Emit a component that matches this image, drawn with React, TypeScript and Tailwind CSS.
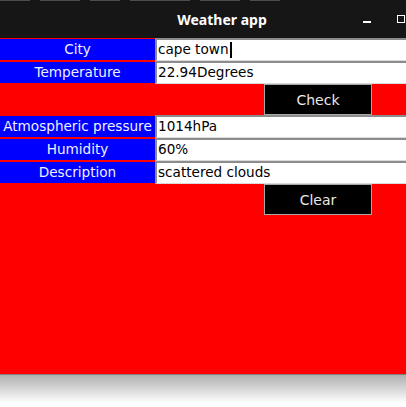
import React from "react";

const font = { fontFamily: '"DejaVu Sans", "Liberation Sans", sans-serif' };

function Label({ text }: { text: string }) {
  return (
    <div className="w-[155px] h-[23px] py-px shrink-0">
      <div className="h-[21px] bg-[#0000ff] text-[#f0f0ff] text-[13.6px] flex items-center justify-center leading-none">
        {text}
      </div>
    </div>
  );
}

function Entry({ value, cursor }: { value: string; cursor?: boolean }) {
  return (
    <div className="flex-1 h-[23px] bg-white border-t-2 border-l-2 border-b border-t-[#8c8c8c] border-l-[#8c8c8c] border-b-[#d9d9d9] flex items-center pl-[1px] text-[13.6px] text-black leading-none">
      <span>{value}</span>
      {cursor && <span className="inline-block w-[2px] h-[16px] bg-black ml-px" />}
    </div>
  );
}

function Row({ label, value, cursor }: { label: string; value: string; cursor?: boolean }) {
  return (
    <div className="flex h-[23px]">
      <Label text={label} />
      <Entry value={value} cursor={cursor} />
    </div>
  );
}

function ButtonRow({ text }: { text: string }) {
  return (
    <div className="h-[31px] flex">
      <div className="w-[264px] shrink-0" />
      <div className="w-[108px] h-[31px] bg-black border border-[#a8a8a8] text-[#e8e8e8] text-[14px] flex items-center justify-center leading-none">
        {text}
      </div>
    </div>
  );
}

export default function App() {
  return (
    <div className="w-[406px] h-[407px] bg-white overflow-hidden" style={font}>
      <div className="h-[38px] bg-[#161616] relative">
        <div className="absolute left-0 top-0 w-full h-[2px] flex gap-[10px] opacity-60">
          <div className="w-[30px] h-[1px] bg-[#707070]" />
          <div className="w-[40px] h-[1px] bg-[#707070]" />
          <div className="w-[30px] h-[1px] bg-[#707070]" />
          <div className="w-[60px] h-[1px] bg-[#707070]" />
          <div className="w-[40px] h-[1px] bg-[#707070]" />
          <div className="w-[30px] h-[1px] bg-[#707070]" />
        </div>
        <div
          className="absolute top-[10px] left-[166px] w-[112px] text-center text-white text-[14px] font-bold leading-[20px]"
          style={{ fontFamily: '"Noto Sans", "DejaVu Sans", sans-serif' }}
        >
          Weather app
        </div>
        <div className="absolute left-[363px] top-[21px] w-[8px] h-[1.5px] bg-white" />
        <div className="absolute left-[397px] top-[15px] w-[8px] h-[8px] border-[1.5px] border-white" />
      </div>
      <div className="h-[336px] bg-[#ff0000] flex flex-col">
        <Row label="City" value="cape town" cursor />
        <Row label="Temperature" value="22.94Degrees" />
        <ButtonRow text="Check" />
        <Row label="Atmospheric pressure" value="1014hPa" />
        <Row label="Humidity" value="60%" />
        <Row label="Description" value="scattered clouds" />
        <ButtonRow text="Clear" />
      </div>
      <div className="h-px bg-[#808080]" />
      <div className="h-[28px] bg-gradient-to-b from-[#b0b0b0] to-white" />
    </div>
  );
}
